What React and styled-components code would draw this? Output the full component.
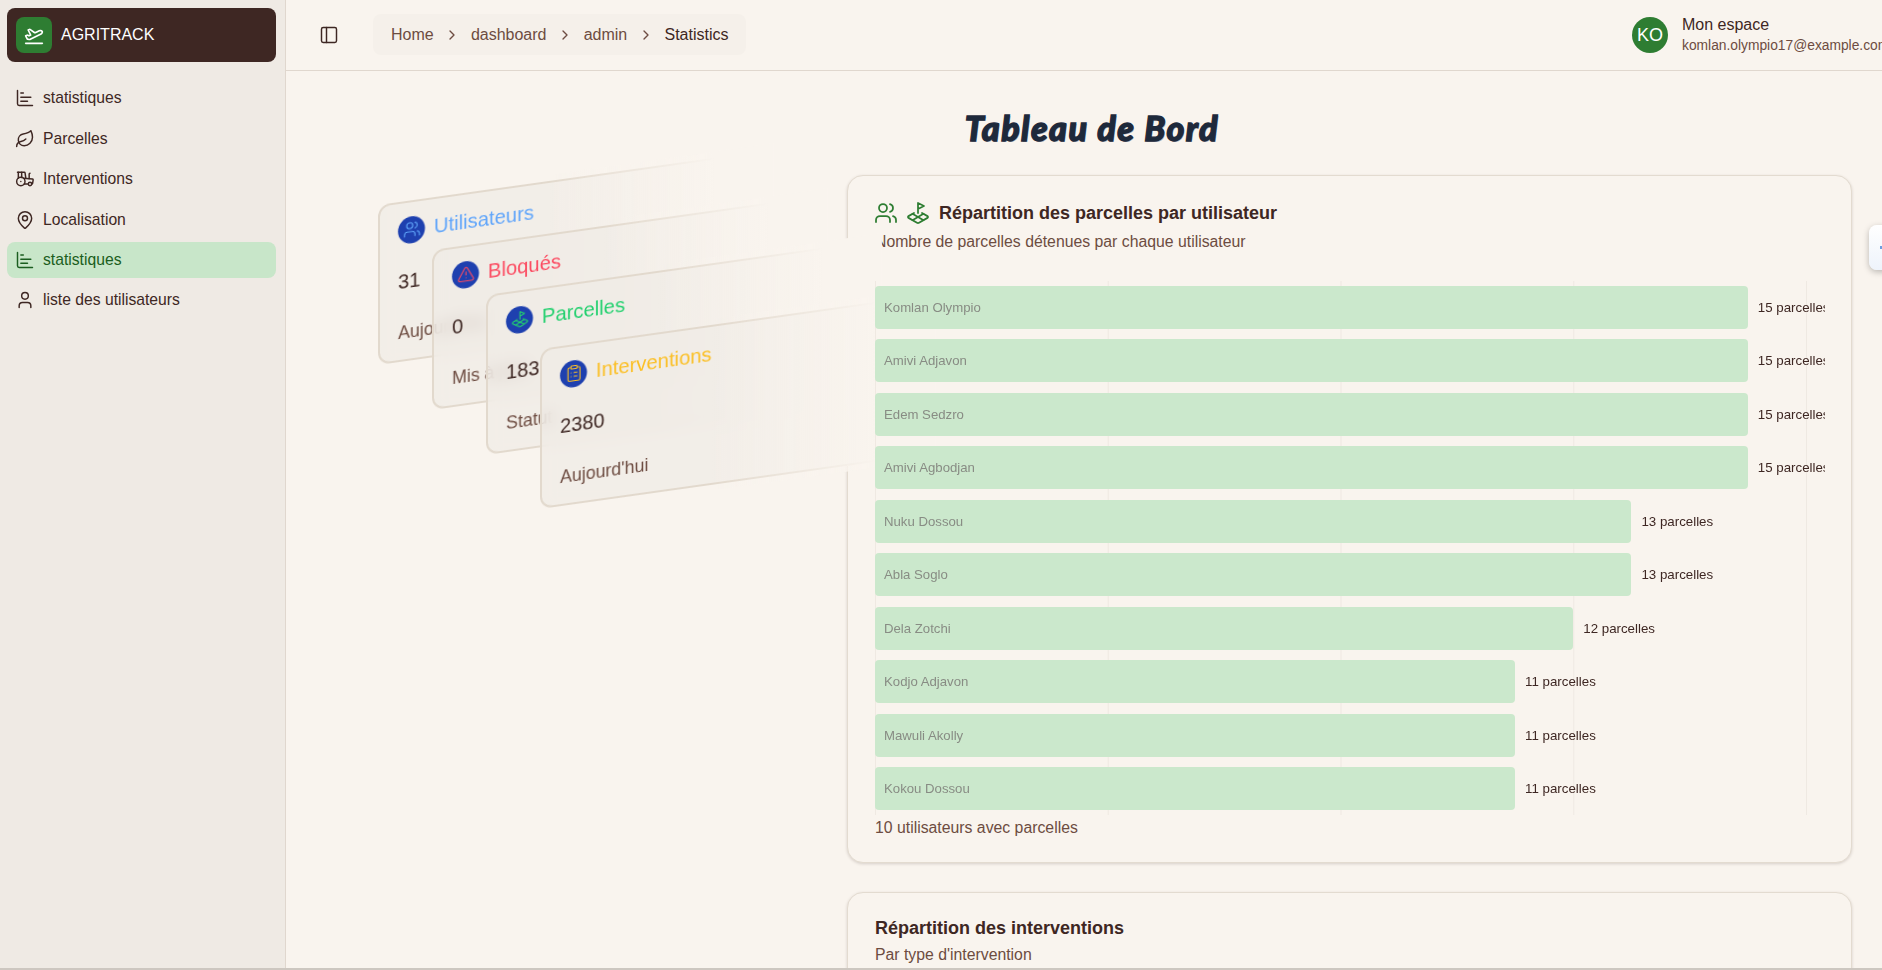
import React from "react";
import styled, { createGlobalStyle } from "styled-components";
import {
  ChartBar,
  ChevronRight,
  ClipboardList,
  LandPlot,
  Leaf,
  MapPin,
  PanelLeft,
  PlaneTakeoff,
  Tractor,
  TriangleAlert,
  User,
  Users,
} from "lucide-react";

const navItems = [
  { label: "statistiques", icon: ChartBar },
  { label: "Parcelles", icon: Leaf },
  { label: "Interventions", icon: Tractor },
  { label: "Localisation", icon: MapPin },
  { label: "statistiques", icon: ChartBar, active: true },
  { label: "liste des utilisateurs", icon: User },
];

const statCards = [
  { title: "Utilisateurs", value: "31", note: "Aujourd'hui", color: "#60a5fa", icon: Users, x: 0, y: 0 },
  { title: "Bloqués", value: "0", note: "Mis à jour", color: "#fb4a60", icon: TriangleAlert, x: 54, y: 45 },
  { title: "Parcelles", value: "183", note: "Statut", color: "#22d06e", icon: LandPlot, x: 108, y: 90 },
  { title: "Interventions", value: "2380", note: "Aujourd'hui", color: "#fbbf24", icon: ClipboardList, x: 162, y: 144 },
];

const owners = [
  { name: "Komlan Olympio", count: 15 },
  { name: "Amivi Adjavon", count: 15 },
  { name: "Edem Sedzro", count: 15 },
  { name: "Amivi Agbodjan", count: 15 },
  { name: "Nuku Dossou", count: 13 },
  { name: "Abla Soglo", count: 13 },
  { name: "Dela Zotchi", count: 12 },
  { name: "Kodjo Adjavon", count: 11 },
  { name: "Mawuli Akolly", count: 11 },
  { name: "Kokou Dossou", count: 11 },
];

const crumbs = ["Home", "dashboard", "admin"];

const App = () => {
  return (
    <>
      <GlobalStyle />
      <Shell>
        <Sidebar>
          <Brand>
            <BrandLogo>
              <PlaneTakeoff size={20} />
            </BrandLogo>
            AGRITRACK
          </Brand>
          <Nav>
            {navItems.map((item, i) => (
              <NavItem key={i} $active={item.active}>
                <item.icon size={20} strokeWidth={1.75} />
                {item.label}
              </NavItem>
            ))}
          </Nav>
        </Sidebar>

        <Content>
          <Header>
            <HeaderLeft>
              <PanelLeft size={20} strokeWidth={1.75} color="#3e2723" />
              <Breadcrumb>
                {crumbs.map((c) => (
                  <React.Fragment key={c}>
                    <span>{c}</span>
                    <ChevronRight size={16} />
                  </React.Fragment>
                ))}
                <Current>Statistics</Current>
              </Breadcrumb>
            </HeaderLeft>
            <Account>
              <Avatar>KO</Avatar>
              <div>
                <AccountName>Mon espace</AccountName>
                <AccountMail>komlan.olympio17@example.com</AccountMail>
              </div>
            </Account>
          </Header>

          <Main>
            <PageTitle>Tableau de Bord</PageTitle>
            <Columns>
              <Stack>
                {statCards.map((card) => (
                  <StatCard key={card.title} $x={card.x} $y={card.y}>
                    <StatHead $color={card.color}>
                      <StatIcon>
                        <card.icon size={18} strokeWidth={1.5} />
                      </StatIcon>
                      {card.title}
                    </StatHead>
                    <StatValue>{card.value}</StatValue>
                    <StatNote>{card.note}</StatNote>
                  </StatCard>
                ))}
              </Stack>

              <Charts>
                <Card>
                  <CardTitle>
                    <TitleIcons>
                      <Users size={24} color="#2e7d32" strokeWidth={1.75} />
                      <LandPlot size={24} color="#2e7d32" strokeWidth={1.75} />
                    </TitleIcons>
                    Répartition des parcelles par utilisateur
                  </CardTitle>
                  <CardSub>Nombre de parcelles détenues par chaque utilisateur</CardSub>
                  <Chart>
                    {owners.map((o) => (
                      <Row key={o.name}>
                        <Bar style={{ width: (o.count / 16) * 931 }}>{o.name}</Bar>
                        <BarValue>{o.count} parcelles</BarValue>
                      </Row>
                    ))}
                  </Chart>
                  <ChartFooter>10 utilisateurs avec parcelles</ChartFooter>
                </Card>
                <Card>
                  <CardTitle>Répartition des interventions</CardTitle>
                  <CardSub>Par type d'intervention</CardSub>
                </Card>
              </Charts>
            </Columns>
          </Main>
        </Content>

        <SideTab>
          <span />
        </SideTab>
      </Shell>
    </>
  );
};

export default App;

const GlobalStyle = createGlobalStyle`
  html, body {
    margin: 0;
    height: 100%;
    overflow: hidden;
  }
  body {
    font-family: "Liberation Sans", Arial, sans-serif;
    font-size: 16px;
    color: #3e2723;
    background: #f9f4ee;
  }
  * {
    box-sizing: border-box;
  }
`;

const Shell = styled.div`
  position: relative;
  display: flex;
  height: 100vh;
  overflow: hidden;
  border-bottom: 2px solid #cdc7c0;
`;

const Sidebar = styled.aside`
  flex: 0 0 286px;
  padding: 8px 9px 0 7px;
  background: #efeae4;
  border-right: 1px solid #e0d7ce;
`;

const Brand = styled.div`
  display: flex;
  align-items: center;
  gap: 9px;
  height: 54px;
  padding-left: 9px;
  border-radius: 8px;
  background: #3e2723;
  color: #fff;
`;

const BrandLogo = styled.div`
  display: flex;
  align-items: center;
  justify-content: center;
  width: 36px;
  height: 36px;
  border-radius: 8px;
  background: #2e7d32;
`;

const Nav = styled.nav`
  display: flex;
  flex-direction: column;
  gap: 4.4px;
  margin-top: 18.4px;
  font-size: 15.7px;
`;

const NavItem = styled.div`
  display: flex;
  align-items: center;
  gap: 8px;
  height: 36px;
  padding-left: 8px;
  border-radius: 8px;
  color: ${(p) => (p.$active ? "#1b5e20" : "#3e2723")};
  background: ${(p) => (p.$active ? "#c8e6c9" : "transparent")};

  svg {
    flex-shrink: 0;
  }
`;

const Content = styled.div`
  flex: 1;
  min-width: 0;
  display: flex;
  flex-direction: column;
`;

const Header = styled.header`
  flex: 0 0 71px;
  display: flex;
  align-items: center;
  border-bottom: 1px solid #e0d7ce;
`;

const HeaderLeft = styled.div`
  flex: 0 0 1346px;
  display: flex;
  align-items: center;
  gap: 34px;
  padding-left: 33px;
`;

const Breadcrumb = styled.div`
  display: flex;
  align-items: center;
  gap: 10.6px;
  height: 41px;
  margin-top: -1px;
  padding: 0 18px;
  border-radius: 8px;
  background: #f5f0ea;
  color: #6d4c41;
  font-size: 16px;
`;

const Current = styled.span`
  color: #3e2723;
`;

const Account = styled.div`
  flex-shrink: 0;
  display: flex;
  align-items: center;
  gap: 14px;
`;

const Avatar = styled.div`
  display: flex;
  align-items: center;
  justify-content: center;
  width: 36px;
  height: 36px;
  border-radius: 50%;
  background: #2e7d32;
  color: #fff;
  font-size: 18px;
`;

const AccountName = styled.div`
  font-size: 16px;
  line-height: 22px;
`;

const AccountMail = styled.div`
  font-size: 13.8px;
  line-height: 20px;
  color: #6d4c41;
  white-space: nowrap;
`;

const Main = styled.main`
  flex: 1;
  min-height: 0;
  overflow: hidden;
  padding-top: 36px;
`;

const PageTitle = styled.h1`
  margin: 0 0 26px;
  padding-left: 16px;
  text-align: center;
  font-family: Lato, sans-serif;
  font-size: 34px;
  font-style: italic;
  font-weight: 900;
  line-height: 42px;
  letter-spacing: 1.5px;
  color: #1e293b;
  -webkit-text-stroke: 1.3px #1e293b;
  text-shadow: 1px 1px 0 rgba(30, 41, 59, 0.35);
`;

const Columns = styled.div`
  display: flex;
  padding-right: 30px;
`;

const Stack = styled.div`
  flex: 0 0 561px;
  display: grid;
  grid-template-areas: "stack";
  align-items: start;
  padding: 30px 0 0 92px;
`;

const StatCard = styled.div`
  grid-area: stack;
  position: relative;
  width: 394px;
  height: 160px;
  display: flex;
  flex-direction: column;
  justify-content: space-between;
  padding: 13.5px 18px;
  border: 2px solid #e2d9cd;
  border-radius: 12px;
  background: rgba(240, 235, 229, 0.7);
  backdrop-filter: blur(8px);
  transform-origin: left top;
  transform: translate(${(p) => p.$x}px, ${(p) => p.$y}px) skewY(-8deg);

  &::after {
    content: "";
    position: absolute;
    top: -5%;
    right: -4px;
    width: 300px;
    height: 110%;
    background: linear-gradient(to left, #f9f4ee 20%, transparent 75%);
    pointer-events: none;
  }
`;

const StatHead = styled.div`
  display: flex;
  align-items: center;
  gap: 9px;
  height: 27px;
  font-size: 20.2px;
  color: ${(p) => p.$color};
`;

const StatIcon = styled.span`
  display: flex;
  align-items: center;
  justify-content: center;
  width: 27px;
  height: 27px;
  border-radius: 50%;
  background: #1e40af;
`;

const StatValue = styled.div`
  font-size: 20px;
  line-height: 27px;
`;

const StatNote = styled.div`
  font-size: 17.8px;
  line-height: 27px;
  color: #6d4c41;
`;

const Charts = styled.div`
  flex: 1;
  min-width: 0;
  display: flex;
  flex-direction: column;
  gap: 29px;
`;

const Card = styled.section`
  padding: 25px 27px 24.5px;
  border: 1px solid #e3dbd0;
  border-radius: 16px;
  background: #f9f4ee;
  box-shadow: 0 1px 3px rgba(62, 39, 35, 0.18);
`;

const CardTitle = styled.div`
  display: flex;
  align-items: center;
  gap: 9px;
  font-size: 18px;
  font-weight: 700;
  line-height: 20px;
`;

const TitleIcons = styled.span`
  display: flex;
  gap: 8.5px;
  margin-left: -1.5px;
`;

const CardSub = styled.div`
  margin-top: 7px;
  font-size: 15.8px;
  line-height: 20px;
  color: #6d4c41;
`;

const Chart = styled.div`
  position: relative;
  width: 950px;
  margin-top: 29px;
  padding: 5px 0;
  overflow: hidden;
  display: flex;
  flex-direction: column;
  gap: 10.44px;
  background-image: linear-gradient(to right, #efe9e2 1px, transparent 1px);
  background-size: 232.75px 100%;
`;

const Row = styled.div`
  display: flex;
  align-items: center;
  height: 43px;
`;

const Bar = styled.div`
  flex-shrink: 0;
  display: flex;
  align-items: center;
  height: 100%;
  padding-left: 9px;
  border-radius: 4px;
  background: #cbe8cc;
  color: #888c84;
  font-size: 13.2px;
`;

const BarValue = styled.span`
  flex-shrink: 0;
  margin-left: 10px;
  font-size: 13.3px;
`;

const ChartFooter = styled.div`
  margin-top: 3px;
  font-size: 15.8px;
  line-height: 20px;
  color: #6d4c41;
`;

const SideTab = styled.div`
  position: absolute;
  top: 225px;
  right: -30px;
  width: 43px;
  height: 45px;
  display: flex;
  align-items: center;
  padding-left: 11px;
  border-radius: 8px;
  background: linear-gradient(to bottom, #ffffff, #eef3fb);
  box-shadow: 0 2px 6px rgba(0, 0, 0, 0.25);

  span {
    width: 3px;
    height: 3px;
    background: #6f9fe0;
  }
`;
